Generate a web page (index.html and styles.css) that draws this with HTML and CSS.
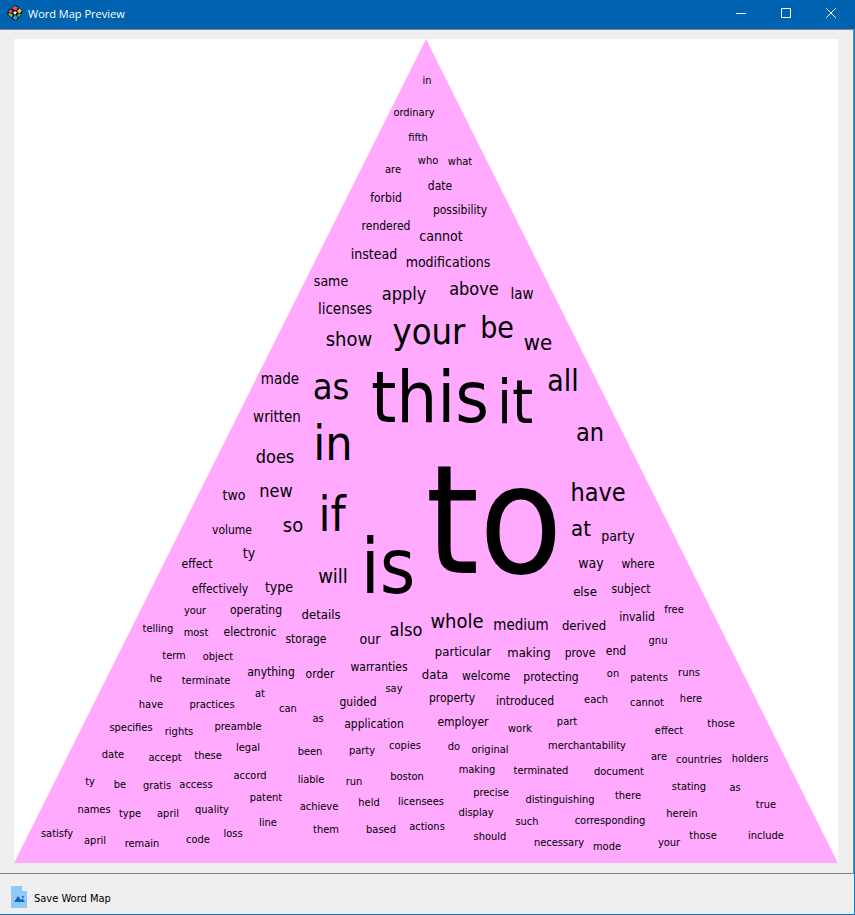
FILE: index.html
```html
<!DOCTYPE html>
<html lang="en">
<head>
<meta charset="utf-8">
<meta name="viewport" content="width=device-width, initial-scale=1">
<title>Word Map Preview</title>
<link rel="stylesheet" href="styles.css">
</head>
<body>
<div class="window">
  <header class="titlebar">
    <svg class="app-icon" viewBox="0 0 16 16" aria-hidden="true">
      <path d="M7.500 0 L11 1.500 L12 3 L15.500 4.500 L15 9 L12.500 12 L9.500 15.800 L5 14.500 L4 12.800 L.2 9.500 L1 5 L4.500 3.500Z" fill="#10151c"/>
      <path d="M7.500 .8 L11 2.500 L9 5.500 L5 3.800Z" fill="#e4505c"/>
      <path d="M12.300 3.600 L15 5.200 L12.700 8.500 L10 6.600Z" fill="#e8c34a"/>
      <path d="M3 4.500 L6 6 L4.200 8 L1.300 6.800Z" fill="#d8603c"/>
      <path d="M2.500 8 L5.800 9.500 L4.800 12.500 L1.200 9.500Z" fill="#7dc242"/>
      <path d="M12 8.800 L14.200 9 L11.700 12.300 L10 10.500Z" fill="#64b43c"/>
      <path d="M7.800 10 L10.800 12 L9.200 15.200 L5.500 13.500Z" fill="#2f9be8"/>
      <path d="M7.800 6 L9.800 7.500 L8 9.800 L6.200 8Z" fill="#f4f4f4"/>
    </svg>
    <h1 class="title">Word Map Preview</h1>
    <div class="window-buttons">
      <button type="button" class="window-button" aria-label="Minimize">
        <svg class="glyph" viewBox="0 0 10 10" aria-hidden="true"><path d="M0 5.500H10"/></svg>
      </button>
      <button type="button" class="window-button" aria-label="Maximize">
        <svg class="glyph" viewBox="0 0 10 10" aria-hidden="true"><path d="M.5 .5H9.500V9.500H.5Z"/></svg>
      </button>
      <button type="button" class="window-button" aria-label="Close">
        <svg class="glyph" viewBox="0 0 10 10" aria-hidden="true"><path d="M.3 .3L9.700 9.700M9.700 .3L.3 9.700"/></svg>
      </button>
    </div>
  </header>

  <main class="preview">
    <svg class="map" viewBox="14 39 824 824" role="img" aria-label="Word map">
      <path class="shape" d="M426 39L838 863H14Z"/>
      <g class="t152"><text x="494" y="573">to</text></g>
      <g class="t76"><text x="388" y="593">is</text></g>
      <g class="t72"><text x="430" y="422">this</text></g>
      <g class="t60"><text x="515" y="423">it</text></g>
      <g class="t48"><text x="333" y="460">in</text><text x="332" y="531">if</text></g>
      <g class="t36"><text x="331" y="399">as</text><text x="429" y="344">your</text></g>
      <g class="t30"><text x="497" y="338">be</text><text x="563" y="391">all</text></g>
      <g class="t25"><text x="590" y="441">an</text><text x="598" y="501">have</text></g>
      <g class="t22"><text x="538" y="350">we</text><text x="581" y="536">at</text></g>
      <g class="t20">
        <text x="349" y="346">show</text><text x="293" y="532">so</text>
        <text x="333" y="583">will</text><text x="457" y="628">whole</text>
      </g>
      <g class="t18">
        <text x="404" y="300">apply</text><text x="474" y="295">above</text>
        <text x="275" y="463">does</text><text x="276" y="497">new</text>
        <text x="406" y="636">also</text>
      </g>
      <g class="t15">
        <text x="522" y="299">law</text><text x="345" y="314">licenses</text>
        <text x="280" y="384">made</text><text x="277" y="422">written</text>
        <text x="521" y="630">medium</text>
      </g>
      <g class="t14">
        <text x="441" y="241">cannot</text><text x="374" y="259">instead</text>
        <text x="448" y="267">modifications</text><text x="331" y="286">same</text>
        <text x="234" y="500">two</text><text x="249" y="558">ty</text>
        <text x="279" y="592">type</text><text x="618" y="541">party</text>
        <text x="591" y="568">way</text><text x="370" y="644">our</text>
      </g>
      <g class="t13">
        <text x="585" y="596">else</text><text x="321" y="619">details</text>
        <text x="584" y="630">derived</text><text x="463" y="656">particular</text>
        <text x="529" y="657">making</text><text x="435" y="679">data</text>
      </g>
      <g class="t12">
        <text x="440" y="190">date</text><text x="386" y="202">forbid</text>
        <text x="460" y="214">possibility</text><text x="386" y="230">rendered</text>
        <text x="232" y="534">volume</text><text x="638" y="568">where</text>
        <text x="631" y="593">subject</text><text x="197" y="568">effect</text>
        <text x="220" y="593">effectively</text><text x="256" y="614">operating</text>
        <text x="250" y="636">electronic</text><text x="306" y="643">storage</text>
        <text x="271" y="676">anything</text><text x="320" y="678">order</text>
        <text x="379" y="671">warranties</text><text x="358" y="706">guided</text>
        <text x="374" y="728">application</text><text x="637" y="621">invalid</text>
        <text x="580" y="657">prove</text><text x="616" y="655">end</text>
        <text x="486" y="680">welcome</text><text x="551" y="681">protecting</text>
        <text x="452" y="702">property</text><text x="525" y="705">introduced</text>
        <text x="463" y="726">employer</text>
      </g>
      <g class="t11">
        <text x="427" y="84">in</text><text x="414" y="116">ordinary</text>
        <text x="418" y="141">fifth</text><text x="428" y="164">who</text>
        <text x="460" y="165">what</text><text x="393" y="173">are</text>
        <text x="195" y="614">your</text><text x="158" y="632">telling</text>
        <text x="196" y="636">most</text><text x="174" y="659">term</text>
        <text x="218" y="660">object</text><text x="156" y="682">he</text>
        <text x="206" y="684">terminate</text><text x="394" y="692">say</text>
        <text x="260" y="697">at</text><text x="151" y="708">have</text>
        <text x="212" y="708">practices</text><text x="288" y="712">can</text>
        <text x="318" y="722">as</text><text x="131" y="731">specifies</text>
        <text x="179" y="735">rights</text><text x="238" y="730">preamble</text>
        <text x="674" y="613">free</text><text x="658" y="644">gnu</text>
        <text x="613" y="677">on</text><text x="649" y="681">patents</text>
        <text x="689" y="676">runs</text><text x="596" y="703">each</text>
        <text x="647" y="706">cannot</text><text x="691" y="702">here</text>
        <text x="520" y="732">work</text><text x="567" y="725">part</text>
        <text x="669" y="734">effect</text><text x="721" y="727">those</text>
        <text x="113" y="758">date</text><text x="165" y="761">accept</text>
        <text x="208" y="759">these</text><text x="248" y="751">legal</text>
        <text x="310" y="755">been</text><text x="90" y="785">ty</text>
        <text x="120" y="788">be</text><text x="157" y="789">gratis</text>
        <text x="196" y="788">access</text><text x="250" y="779">accord</text>
        <text x="311" y="783">liable</text><text x="266" y="801">patent</text>
        <text x="94" y="813">names</text><text x="130" y="817">type</text>
        <text x="168" y="817">april</text><text x="212" y="813">quality</text>
        <text x="268" y="826">line</text><text x="57" y="837">satisfy</text>
        <text x="95" y="844">april</text><text x="142" y="847">remain</text>
        <text x="198" y="843">code</text><text x="233" y="837">loss</text>
        <text x="362" y="754">party</text><text x="405" y="749">copies</text>
        <text x="454" y="750">do</text><text x="490" y="753">original</text>
        <text x="477" y="773">making</text><text x="541" y="774">terminated</text>
        <text x="354" y="785">run</text><text x="407" y="780">boston</text>
        <text x="319" y="810">achieve</text><text x="369" y="806">held</text>
        <text x="421" y="805">licensees</text><text x="491" y="796">precise</text>
        <text x="560" y="803">distinguishing</text><text x="476" y="816">display</text>
        <text x="527" y="825">such</text><text x="326" y="833">them</text>
        <text x="381" y="833">based</text><text x="427" y="830">actions</text>
        <text x="490" y="840">should</text><text x="559" y="846">necessary</text>
        <text x="587" y="749">merchantability</text><text x="659" y="760">are</text>
        <text x="699" y="763">countries</text><text x="750" y="762">holders</text>
        <text x="619" y="775">document</text><text x="689" y="790">stating</text>
        <text x="735" y="791">as</text><text x="628" y="799">there</text>
        <text x="766" y="808">true</text><text x="610" y="824">corresponding</text>
        <text x="682" y="817">herein</text><text x="607" y="850">mode</text>
        <text x="669" y="846">your</text><text x="703" y="839">those</text>
        <text x="766" y="839">include</text>
      </g>
    </svg>
  </main>

  <footer class="toolbar">
    <button type="button" class="save">
      <svg class="file-icon" viewBox="0 0 16 22" aria-hidden="true">
        <path d="M0 0H11L16 5V22H0Z" fill="#90caf9"/>
        <path d="M11 0L16 5H11Z" fill="#e1f5fe"/>
        <path d="M3 16L7 10L10 14L11.500 12.500L14 16Z" fill="#1565c0"/>
        <circle cx="12" cy="11" r="1" fill="#1565c0"/>
      </svg>
      <span class="save-label">Save Word Map</span>
    </button>
  </footer>
</div>
</body>
</html>
```
FILE: styles.css
```css
* {
  box-sizing: border-box;
}

body {
  margin: 0;
  background: #efefef;
  color: #000;
  font-family: "DejaVu Sans Condensed", "DejaVu Sans", sans-serif;
  font-size: 11px;
}

.window {
  display: flex;
  flex-direction: column;
  min-height: 100vh;
  border-right: 1px solid #1874bd;
  border-bottom: 1px solid #1874bd;
}

.titlebar {
  display: flex;
  align-items: center;
  height: 29px;
  padding-left: 7px;
  margin-right: -1px;
  background: #0063b1;
  color: #fff;
}

.app-icon {
  width: 16px;
  height: 16px;
  margin-bottom: 3px;
}

.title {
  flex: 1;
  margin: 0 0 1px 5px;
  font-family: "Open Sans", "Noto Sans", sans-serif;
  font-size: 11px;
  font-weight: 400;
  line-height: 16px;
}

.window-buttons {
  display: flex;
  align-self: stretch;
}

.window-button {
  display: flex;
  align-items: center;
  justify-content: center;
  width: 48px;
  padding: 0 0 3px;
  border: 0;
  background: none;
  color: inherit;
}

.window-button:nth-child(2) {
  width: 42px;
}

.glyph {
  width: 10px;
  height: 10px;
  fill: none;
  stroke: currentColor;
  stroke-width: 1;
}

.window-button:last-child {
  padding-right: 1px;
}

.preview {
  padding: 9px 15px 10px 14px;
  border: solid #80858e;
  border-width: 1px 1px 1px 0;
}

.map {
  display: block;
  width: 100%;
  background: #fff;
  text-anchor: middle;
}

.shape {
  fill: #ffaaff;
}

.t11 { font-size: 11px; }
.t12 { font-size: 12px; }
.t13 { font-size: 13px; }
.t14 { font-size: 14px; }
.t15 { font-size: 15px; }
.t18 { font-size: 18px; }
.t20 { font-size: 20px; }
.t22 { font-size: 22px; }
.t25 { font-size: 25px; }
.t30 { font-size: 30px; }
.t36 { font-size: 36px; }
.t48 { font-size: 48px; }
.t60 { font-size: 60px; }
.t72 { font-size: 72px; }
.t76 { font-size: 76px; }
.t152 { font-size: 152px; }

.toolbar {
  display: flex;
  flex: 1;
  align-items: center;
  padding: 5px 11px 0;
}

.save {
  display: flex;
  align-items: center;
  gap: 7px;
  padding: 0;
  border: 0;
  background: none;
  color: inherit;
  font: inherit;
}

.save-label {
  padding-top: 3px;
}

.file-icon {
  width: 16px;
  height: 22px;
}
```
